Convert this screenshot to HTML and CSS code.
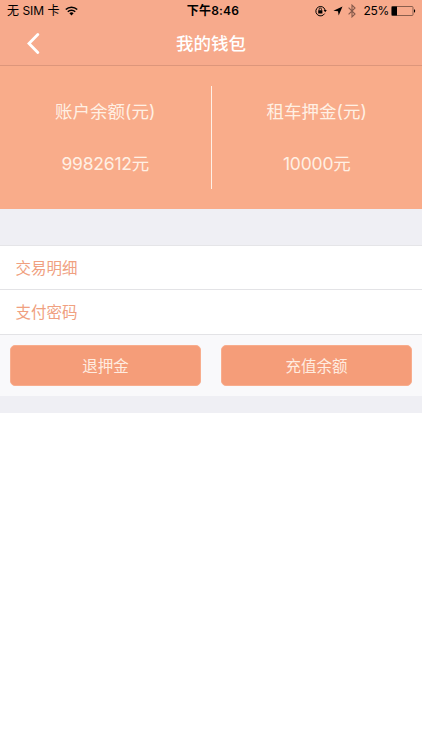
FILE: index.html
```html
<!DOCTYPE html>
<html lang="zh-CN">
<head>
  <meta charset="UTF-8">
  <meta name="viewport" content="width=device-width, initial-scale=1.0">
  <title>我的钱包</title>
  <link rel="stylesheet" href="styles.css">
</head>
<body>

<header class="header">
  <div class="status-bar">
    <div class="status-left">
      <span>无 SIM 卡</span>
      <svg class="wifi" width="13" height="10" viewBox="0 0 13 10">
        <path d="M0.8 3.5a8.2 8.2 0 0 1 11.4 0M2.8 5.7a5.3 5.3 0 0 1 7.4 0" fill="none" stroke="#000" stroke-width="1.6"/>
        <path d="M4.4 7.3a3 3 0 0 1 4.2 0L6.5 9.5z"/>
      </svg>
    </div>
    <div class="status-time">下午8:46</div>
    <div class="status-right">
      <svg width="12" height="12" viewBox="0 0 12 12">
        <path d="M9.6 8.6a4.7 4.7 0 1 1 .5-3.6" fill="none" stroke="#000" stroke-width="1"/>
        <path d="M8.6 4.9h3.2l-1.6 2.3zM3.2 5.2h4.2v3.2H3.2z"/>
        <path d="M4.1 5.4V4.2a1.2 1.2 0 0 1 2.4 0v1.2" fill="none" stroke="#000" stroke-width=".8"/>
      </svg>
      <svg class="location" width="10" height="10" viewBox="0 0 10 10">
        <path d="M9.5.5L5.7 9.5 5 5.2.4 4.7z"/>
      </svg>
      <svg class="bluetooth" width="8" height="14" viewBox="0 0 8 14">
        <path d="M.6 3.7l6.4 6.3-3 2.9V1.1l3 2.9L.6 10.3" fill="none" stroke="#85594b" stroke-width="1.1"/>
      </svg>
      <span class="percent">25%</span>
      <svg class="battery" width="25" height="10" viewBox="0 0 25 10">
        <rect x=".5" y=".5" width="21.5" height="9" rx="1" fill="none" stroke="#6e4b3e" stroke-width=".8"/>
        <path d="M.8.5H6v9H.8zM23 3.3c1.6.2 1.6 3.2 0 3.4z"/>
      </svg>
    </div>
  </div>
  <div class="nav-bar">
    <svg class="back" width="14" height="22" viewBox="0 0 14 22">
      <path d="M11.8 1.6L3 10.5l8.8 8.9" fill="none" stroke="#fff" stroke-width="2.8" stroke-linecap="round" stroke-linejoin="miter"/>
    </svg>
    <h1>我的钱包</h1>
  </div>
</header>

<section class="balance">
  <div class="balance-item">
    <p>账户余额(元)</p>
    <p class="amount">9982612元</p>
  </div>
  <div class="divider"></div>
  <div class="balance-item">
    <p>租车押金(元)</p>
    <p class="amount">10000元</p>
  </div>
</section>

<main class="content">
  <ul class="menu">
    <li>交易明细</li>
    <li>支付密码</li>
  </ul>
  <div class="actions">
    <button>退押金</button>
    <button>充值余额</button>
  </div>
</main>

</body>
</html>
```

FILE: styles.css
```css
body {
  margin: 0;
  background-color: #fff;
  font-family: Inter, "Noto Sans CJK SC", sans-serif;
  font-weight: 400;
}

.header {
  height: 66px;
  box-sizing: border-box;
  background-color: #f7aa8c;
  border-bottom: 1px solid #dd967b;
}

.status-bar {
  display: grid;
  grid-template-columns: 1fr auto 1fr;
  align-items: center;
  height: 22px;
  padding: 0 6px 0 7px;
  font-size: 12px;
  line-height: 22px;
  color: #000;
}

.status-left,
.status-right {
  display: flex;
  align-items: center;
}

.status-left {
  gap: 5px;
}

.status-right {
  justify-content: flex-end;
}

.status-time {
  padding-left: 3px;
  font-weight: 600;
  letter-spacing: 0.2px;
}

.location {
  margin-left: 6px;
}

.bluetooth {
  margin-left: 5px;
}

.percent {
  margin: 0 2px 0 8px;
  letter-spacing: -0.3px;
}

.nav-bar {
  display: grid;
  grid-template-columns: 40px 1fr 40px;
  align-items: center;
  height: 43px;
}

.back {
  margin-left: 26px;
}

h1 {
  margin: 0;
  font-size: 17.5px;
  font-weight: 500;
  line-height: 43px;
  text-align: center;
  color: #fff;
}

.balance {
  display: flex;
  height: 143px;
  padding-top: 20px;
  box-sizing: border-box;
  background-color: #f9ac8a;
}

.balance-item {
  flex: 1;
  text-align: center;
  color: #fff0e4;
}

.balance-item p {
  margin: 0;
  padding-top: 13px;
  font-size: 17.5px;
  line-height: 26px;
}

.balance-item .amount {
  padding-top: 26px;
  letter-spacing: -0.2px;
}

.divider {
  width: 1px;
  height: 103px;
  background-color: #fff0e6;
}

.content {
  padding: 36px 0 17px;
  background-color: #efeff4;
}

.menu {
  margin: 0;
  padding: 0;
  list-style: none;
  background-color: #fff;
  border-top: 1px solid #e5e5e8;
}

.menu li {
  height: 44px;
  padding-left: 15.5px;
  box-sizing: border-box;
  border-bottom: 1px solid #e3e3e6;
  font-size: 15.5px;
  line-height: 45px;
  color: #f0a080;
}

.menu li:last-child {
  height: 45px;
}

.actions {
  display: flex;
  gap: 20px;
  padding: 10px;
  background-color: #f9f9fb;
}

button {
  flex: 1;
  height: 41px;
  padding: 0 0 2px;
  border: 1px solid #f8ad8d;
  border-radius: 5px;
  background-color: #f59d79;
  font-family: inherit;
  font-size: 15.5px;
  color: #ffece0;
}
```
